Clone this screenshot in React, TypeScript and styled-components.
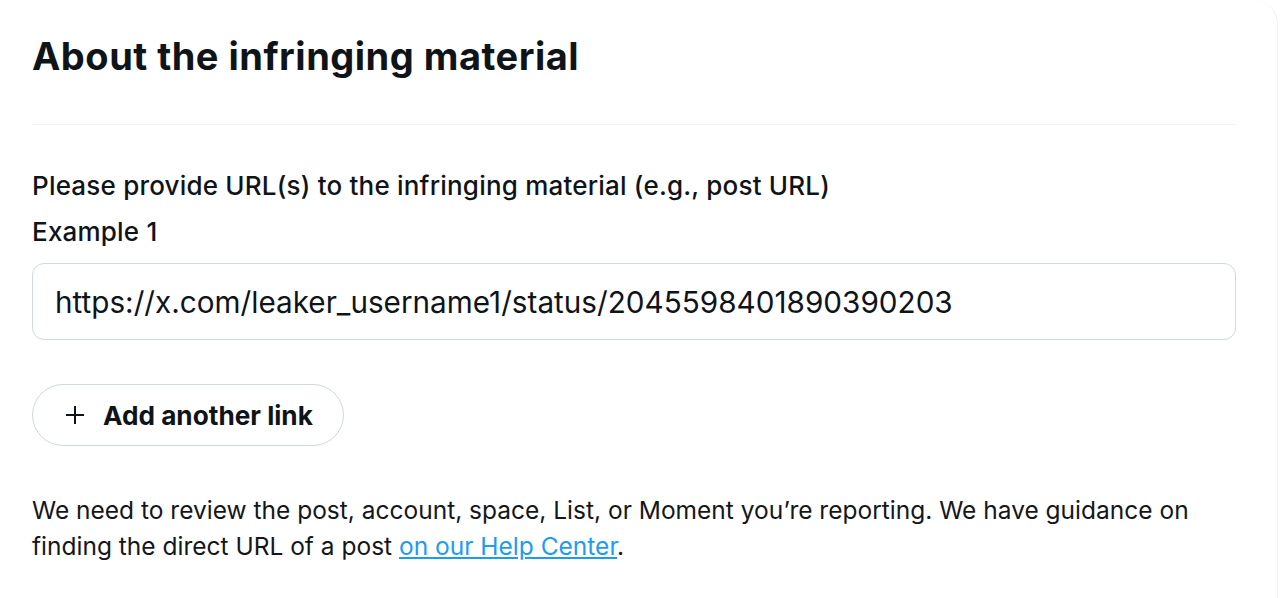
import * as React from 'react';
import styled, { createGlobalStyle } from 'styled-components';

const GlobalStyle = createGlobalStyle`
  html, body {
    margin: 0;
    padding: 0;
    background: #ffffff;
  }

  body {
    font-family: Inter, "Liberation Sans", Arial, sans-serif;
    color: #0f1419;
    -webkit-font-smoothing: antialiased;
  }
`;

const Card = styled.div`
  box-sizing: border-box;
  width: 1278px;
  min-height: 598px;
  padding: 32px 41px 0 32px;
  border-right: 1px solid #eff3f4;
  border-top-right-radius: 24px;
  background: #ffffff;
`;

const Heading = styled.h2`
  margin: 0;
  font-size: 38px;
  line-height: 48px;
  font-weight: 700;
  letter-spacing: 0.5px;
`;

const Divider = styled.hr`
  margin: 44px 0 0;
  border: 0;
  height: 1px;
  background: #eff3f4;
`;

const Label = styled.div<{ $gap: number }>`
  margin-top: ${p => p.$gap}px;
  font-size: 26px;
  font-weight: 500;
  line-height: 32px;
  letter-spacing: 0.2px;
`;

const InputBox = styled.div`
  box-sizing: border-box;
  margin-top: 15px;
  display: flex;
  align-items: center;
  height: 77px;
  padding: 0 22px;
  border: 1px solid #cfd9de;
  border-radius: 12px;
  font-size: 29.7px;
  line-height: 36px;
  white-space: nowrap;
`;

const AddButton = styled.button`
  box-sizing: border-box;
  margin-top: 44px;
  display: inline-flex;
  align-items: center;
  gap: 18px;
  height: 62px;
  padding: 0 30px 0 32px;
  border: 1px solid #cfd9de;
  border-radius: 999px;
  background: #ffffff;
  color: #0f1419;
  font-family: inherit;
  font-size: 26.2px;
  font-weight: 700;
  cursor: pointer;
`;

const Note = styled.p`
  margin: 46px 0 0;
  font-size: 24.5px;
  line-height: 36px;
  color: #14171a;
`;

const HelpLink = styled.a`
  color: #1d9bf0;
  text-decoration: underline;
  text-underline-offset: 2px;
`;

const PlusIcon = () => (
  <svg width="20" height="20" viewBox="0 0 20 20" aria-hidden="true">
    <path d="M10 1v18M1 10h18" stroke="#0f1419" strokeWidth="2" fill="none" />
  </svg>
);

export default function App() {
  return (
    <>
      <GlobalStyle />
      <Card>
        <Heading>About the infringing material</Heading>
        <Divider />
        <Label $gap={45}>Please provide URL(s) to the infringing material (e.g., post URL)</Label>
        <Label $gap={14}>Example 1</Label>
        <InputBox>https://x.com/leaker_username1/status/2045598401890390203</InputBox>
        <div>
          <AddButton type="button">
            <PlusIcon />
            Add another link
          </AddButton>
        </div>
        <Note>
          We need to review the post, account, space, List, or Moment you’re reporting. We have guidance on
          finding the direct URL of a post <HelpLink href="#">on our Help Center</HelpLink>.
        </Note>
      </Card>
    </>
  );
}
